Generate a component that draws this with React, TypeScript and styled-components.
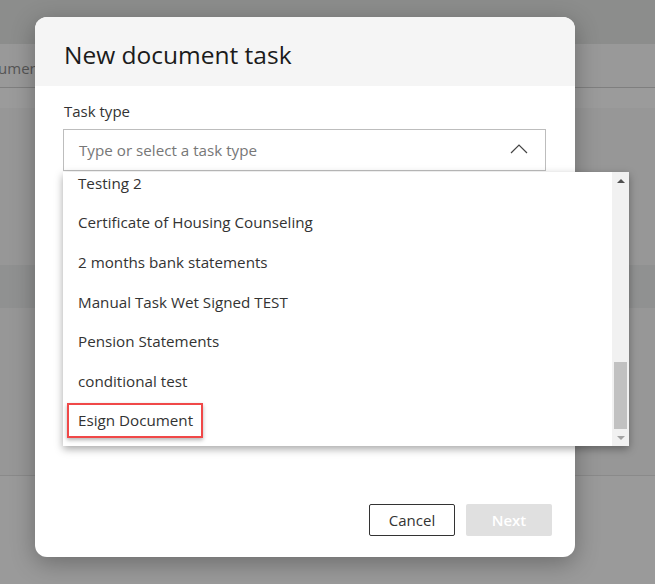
import styled, { createGlobalStyle } from "styled-components";

const taskTypes = [
  "Testing 2",
  "Certificate of Housing Counseling",
  "2 months bank statements",
  "Manual Task Wet Signed TEST",
  "Pension Statements",
  "conditional test",
  "Esign Document",
];

const GlobalStyle = createGlobalStyle`
  html, body {
    margin: 0;
    padding: 0;
  }
  body {
    font-family: "Open Sans", "Noto Sans", sans-serif;
    background: #969696;
  }
`;

export default function App() {
  return (
    <>
      <GlobalStyle />
      <SPage>
        <STopBand />
        <STabBand>
          <STabLabel>Documents</STabLabel>
        </STabBand>
        <SSubBand />
        <SContentBand $height={157} />
        <SRowBand />
        <SContentBand $height={167} />
        <SFooterBand />

        <SModal>
          <SHeader>
            <STitle>New document task</STitle>
          </SHeader>
          <SBody>
            <SLabel>Task type</SLabel>
            <SField>
              <SInput>
                <SPlaceholder>Type or select a task type</SPlaceholder>
                <svg width="18" height="10" viewBox="0 0 18 10">
                  <path d="M1 9 L9 1 L17 9" fill="none" stroke="#444" strokeWidth="1.2" />
                </svg>
              </SInput>
              <SDropdown>
                <SList>
                  {taskTypes.map((t, i) => (
                    <SItem key={t}>
                      {i === taskTypes.length - 1 ? <SHighlight>{t}</SHighlight> : t}
                    </SItem>
                  ))}
                </SList>
                <SScrollbar>
                  <SArrow $up />
                  <SThumbTrack>
                    <SThumb />
                  </SThumbTrack>
                  <SArrow />
                </SScrollbar>
              </SDropdown>
            </SField>
            <SFooter>
              <SCancelButton type="button">Cancel</SCancelButton>
              <SNextButton type="button" disabled>
                Next
              </SNextButton>
            </SFooter>
          </SBody>
        </SModal>
      </SPage>
    </>
  );
}

const SPage = styled.div`
  position: relative;
  width: 655px;
  height: 584px;
  overflow: hidden;
  display: flex;
  flex-direction: column;
`;

const STopBand = styled.div`
  height: 44px;
  background: #8c8d8c;
`;

const STabBand = styled.div`
  height: 43px;
  background: #999999;
  border-bottom: 1px solid #7f7f7f;
  display: flex;
  align-items: center;
  overflow: hidden;
`;

const STabLabel = styled.span`
  margin-left: -29px;
  margin-top: 4px;
  font-size: 15px;
  color: #555;
  white-space: nowrap;
`;

const SSubBand = styled.div`
  height: 20px;
  background: #9b9b9b;
`;

const SContentBand = styled.div<{ $height: number }>`
  height: ${(p) => p.$height}px;
  background: #979797;
`;

const SRowBand = styled.div`
  height: 43px;
  background: #909191;
`;

const SFooterBand = styled.div`
  flex: 1;
  background: #9a9a9a;
  border-top: 1px solid #8a8a8a;
`;

const SModal = styled.div`
  position: absolute;
  left: 35px;
  top: 17px;
  width: 540px;
  height: 540px;
  background: #ffffff;
  border-radius: 12px;
  box-shadow: 0 6px 24px rgba(0, 0, 0, 0.3);
  display: flex;
  flex-direction: column;
`;

const SHeader = styled.div`
  height: 69px;
  box-sizing: border-box;
  padding: 0 29px;
  background: #f5f5f5;
  border-radius: 12px 12px 0 0;
  display: flex;
  align-items: center;
`;

const STitle = styled.h1`
  margin: 6px 0 0;
  font-size: 24.5px;
  font-weight: 500;
  color: #1b1b1b;
`;

const SBody = styled.div`
  flex: 1;
  display: flex;
  flex-direction: column;
  padding: 15px 23px 21px 28px;
`;

const SLabel = styled.label`
  font-size: 15px;
  color: #333;
  line-height: 20px;
  margin-left: 1px;
`;

const SField = styled.div`
  position: relative;
  margin-top: 8px;
  width: 483px;
`;

const SInput = styled.div`
  height: 42px;
  box-sizing: border-box;
  border: 1px solid #bdbdbd;
  display: flex;
  align-items: center;
  justify-content: space-between;
  padding: 0 17px 0 15px;
  svg {
    margin-top: -2px;
  }
`;

const SPlaceholder = styled.span`
  font-size: 15.2px;
  color: #777;
`;

const SDropdown = styled.div`
  position: absolute;
  top: 43px;
  left: 0;
  width: 566px;
  height: 274px;
  background: #fff;
  box-shadow: 0 3px 8px rgba(0, 0, 0, 0.35);
  display: flex;
  z-index: 2;
`;

const SList = styled.ul`
  flex: 1;
  margin: 0;
  padding: 0;
  list-style: none;
  overflow: hidden;
`;

const SItem = styled.li`
  height: 39.6px;
  display: flex;
  align-items: center;
  padding-left: 15px;
  font-size: 15.2px;
  color: #333;
  &:first-child {
    margin-top: -9px;
  }
`;

const SHighlight = styled.span`
  margin-left: -11px;
  padding: 5px 8px 6px 9px;
  border: 2px solid #f04848;
  box-shadow: 0 2px 4px rgba(0, 0, 0, 0.3);
`;

const SScrollbar = styled.div`
  width: 17px;
  background: #f1f1f1;
  display: flex;
  flex-direction: column;
  align-items: center;
`;

const SArrow = styled.div<{ $up?: boolean }>`
  height: 17px;
  width: 17px;
  display: flex;
  align-items: center;
  justify-content: center;
  &::before {
    content: "";
    width: 0;
    height: 0;
    border-left: 4px solid transparent;
    border-right: 4px solid transparent;
    ${(p) =>
      p.$up
        ? "border-bottom: 4px solid #505050;"
        : "border-top: 4px solid #a3a3a3;"}
  }
`;

const SThumbTrack = styled.div`
  flex: 1;
  width: 100%;
  display: flex;
  flex-direction: column;
  justify-content: flex-end;
  align-items: center;
`;

const SThumb = styled.div`
  width: 13px;
  height: 67px;
  background: #c1c1c1;
`;

const SFooter = styled.div`
  margin-top: auto;
  display: flex;
  justify-content: flex-end;
  gap: 11px;
`;

const SCancelButton = styled.button`
  width: 86px;
  height: 32px;
  background: #fff;
  border: 1px solid #333;
  border-radius: 2px;
  font-family: inherit;
  font-size: 15px;
  color: #333;
`;

const SNextButton = styled.button`
  width: 86px;
  height: 32px;
  background: #e0e0e0;
  border: none;
  border-radius: 2px;
  font-family: inherit;
  font-size: 15px;
  font-weight: 600;
  color: #fff;
`;
